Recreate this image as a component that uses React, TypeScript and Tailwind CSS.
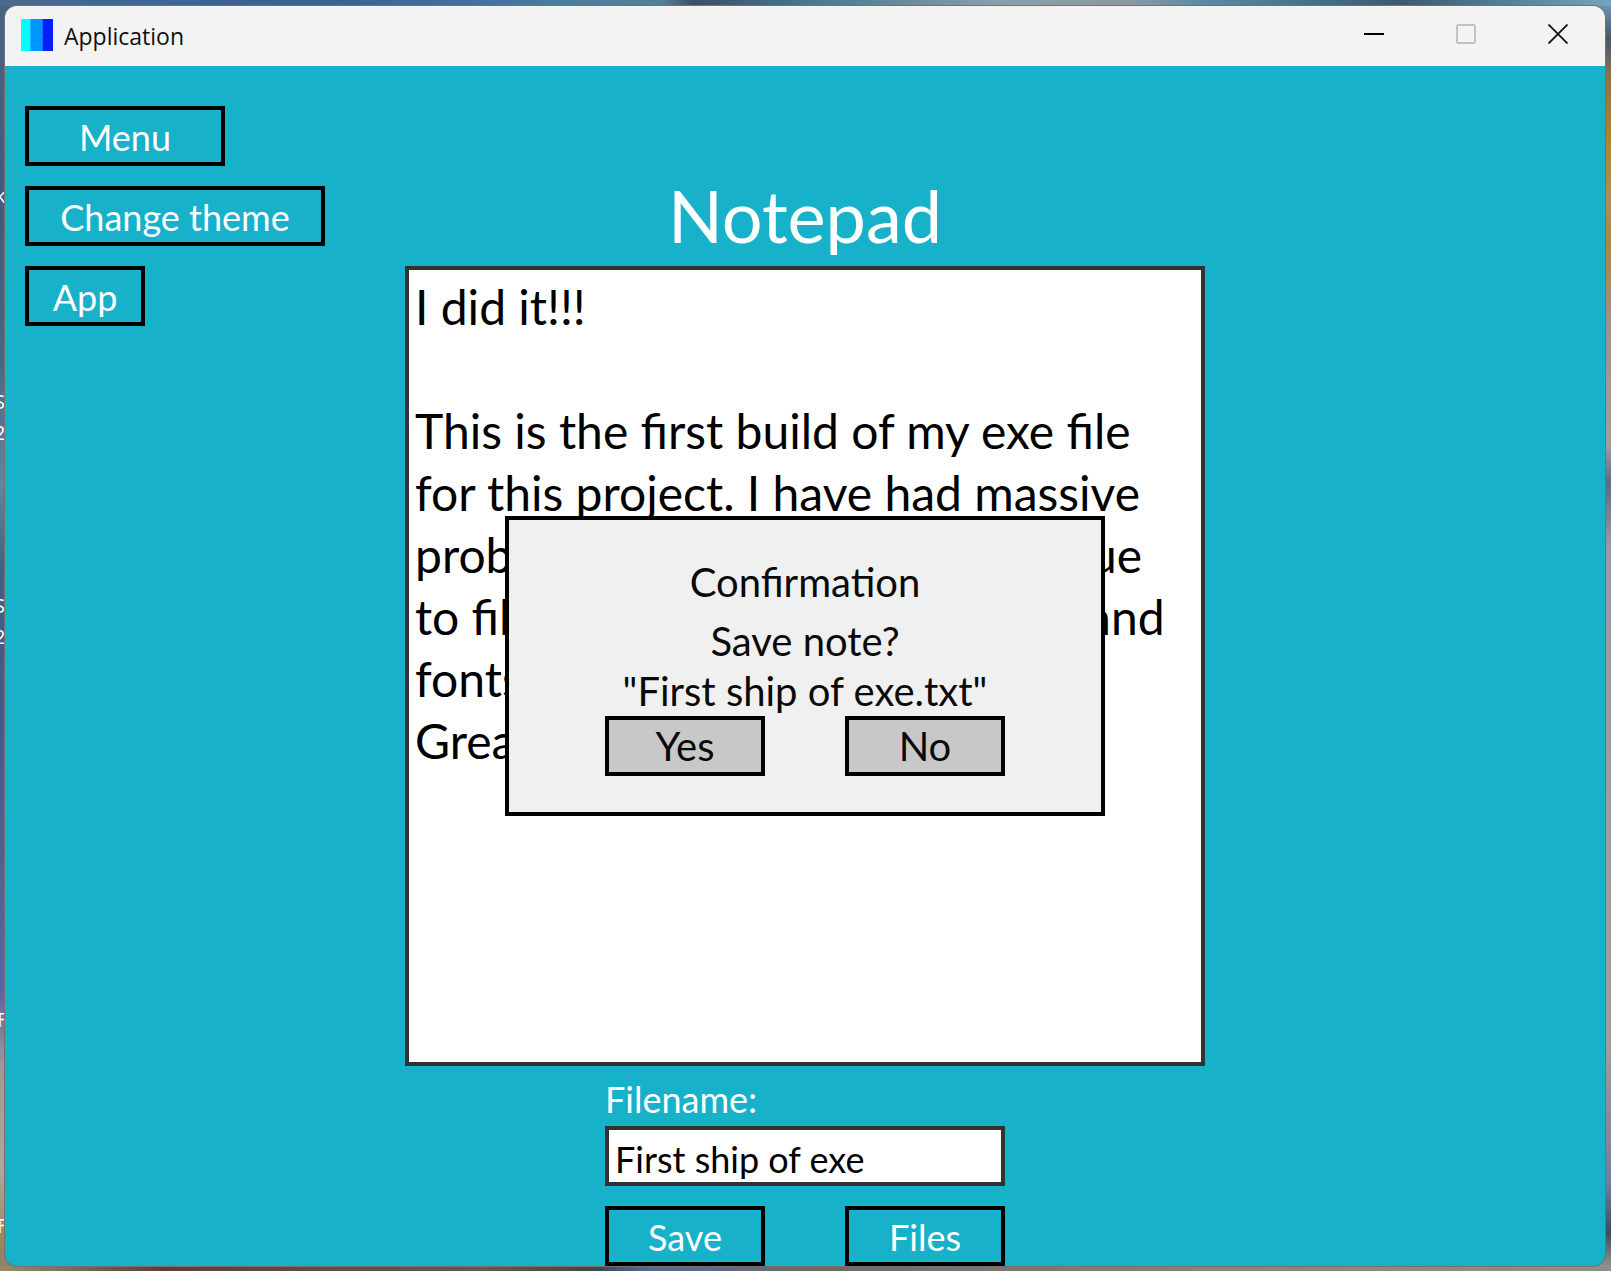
const note = `I did it!!!

This is the first build of my exe file
for this project. I have had massive
problems getting it to run fully due
to file paths, stale images, icons and
fonts not loading.
Great`;

const edgeLabels = [
  { text: "k", box: "top-[182px] -left-[5px]" },
  { text: "S", box: "top-[388px] -left-[6px]" },
  { text: "2", box: "top-[419px] -left-[6px]" },
  { text: "S", box: "top-[592px] -left-[6px]" },
  { text: "2", box: "top-[623px] -left-[6px]" },
  { text: "F", box: "top-[1006px] -left-[3px]" },
  { text: "F", box: "top-[1212px] -left-[3px]" },
];

const outline = "h-[60px] border-4 border-black pt-[2px] text-[36px] leading-[50px] text-white";

function Desktop() {
  return (
    <div aria-hidden="true" className="absolute inset-0 overflow-hidden bg-[#85827c]">
      <div className="absolute inset-y-0 left-0 w-1/2 bg-[linear-gradient(180deg,#4a6584_0%,#3f5a7a_15%,#456684_28%,#62869b_38%,#3f5f80_45%,#425a8c_58%,#4f6391_68%,#5a64a0_78%,#9b9b98_84%,#a9aaa7_92%,#a08a55_97%,#8b8068_100%)]" />
      <div className="absolute inset-y-0 right-0 w-1/2 bg-[linear-gradient(180deg,#6f9fbd_0%,#46586c_3%,#8a7350_6%,#b0832f_11%,#a8905f_16%,#ab8544_19%,#9a9490_26%,#a09d9b_35%,#5c6b84_38%,#9b9b9d_43%,#a09e9d_82%,#8c8c90_88%,#6f7fa0_93%,#3e4d5a_97%,#9d9d97_100%)]" />
      <div className="absolute inset-x-0 top-0 h-[6px] bg-[linear-gradient(90deg,#4a6a8c,#3b6090_20%,#4c7c9c_35%,#5a7f9a_41%,#3a4f68_43%,#4a7590_50%,#88a0ac_62%,#8a9aa5_70%,#5a88a5_75%,#3a5a70_87%,#76a3c0)]" />
      <div className="absolute inset-x-0 bottom-0 h-[5px] bg-[linear-gradient(90deg,#978c6a,#5e3e36_10%,#6b5650_30%,#3f434c_37%,#566890_40%,#6f6a66_52%,#86837f_75%,#8f8f88)]" />
      {edgeLabels.map((label, i) => (
        <span key={i} className={`absolute font-['Open_Sans'] text-[20px] leading-7 text-white ${label.box}`}>
          {label.text}
        </span>
      ))}
    </div>
  );
}

function TitleBar() {
  return (
    <header className="flex h-[60px] shrink-0 items-center bg-[#f3f3f3] pl-4 pr-px">
      <svg width="32" height="32" viewBox="0 0 32 32" className="-mt-[2px]" aria-hidden="true">
        <rect width="32" height="32" fill="#0095ff" />
        <rect width="9" height="32" fill="#00ffff" />
        <rect x="9" width="1" height="32" fill="#22b4ff" />
        <rect x="21" width="1" height="32" fill="#1470ff" />
        <rect x="22" width="10" height="32" fill="#0022ff" />
        <g fill="#0078e8">
          {[3, 10, 15, 22, 28].map((y) => (
            <g key={y}>
              <rect x="4" y={y} width="1" height="1" fill="#00dcf0" />
              <rect x="7" y={y - 2} width="1" height="1" fill="#00dcf0" />
              <rect x="13" y={y - 1} width="1" height="1" />
              <rect x="17" y={y} width="1" height="1" />
              <rect x="20" y={y - 2} width="1" height="1" />
              <rect x="25" y={y} width="1" height="1" fill="#3a00f0" />
              <rect x="29" y={y - 1} width="1" height="1" fill="#3a00f0" />
            </g>
          ))}
        </g>
      </svg>
      <h1 className="ml-[11px] grow font-['Open_Sans'] text-[23px] leading-8 text-[#111]">Application</h1>
      <div className="-mt-1 flex items-center">
        <button aria-label="Minimize" className="flex h-12 w-[92px] items-center justify-center">
          <svg width="20" height="20" viewBox="0 0 20 20">
            <path d="M0 10h20" stroke="#000" strokeWidth="2" />
          </svg>
        </button>
        <button aria-label="Maximize" disabled className="flex h-12 w-[92px] items-center justify-center">
          <svg width="20" height="20" viewBox="0 0 20 20" fill="none">
            <rect x="1" y="1" width="18" height="18" rx="1.5" stroke="#c3c3c3" strokeWidth="2" />
          </svg>
        </button>
        <button aria-label="Close" className="flex h-12 w-[92px] items-center justify-center">
          <svg width="20" height="20" viewBox="0 0 20 20">
            <path d="M0.5 0.5l19 19M19.5 0.5l-19 19" stroke="#111" strokeWidth="1.8" />
          </svg>
        </button>
      </div>
    </header>
  );
}

function Confirmation() {
  return (
    <div
      role="dialog"
      aria-labelledby="confirm-title"
      className="absolute left-1/2 top-1/2 flex h-[300px] w-[600px] -translate-x-1/2 -translate-y-1/2 flex-col items-center border-4 border-black bg-[#f0f0f0] pt-9 text-[40px] text-[#0a0a0a]"
    >
      <h3 id="confirm-title" className="leading-[52px]">Confirmation</h3>
      <p className="pt-2 text-center leading-[50px]">
        Save note?
        <br />
        "First ship of exe.txt"
      </p>
      <div className="flex gap-20">
        <button className="h-[60px] w-40 border-4 border-black bg-[#c8c8c8] leading-[52px]">Yes</button>
        <button className="h-[60px] w-40 border-4 border-black bg-[#c8c8c8] leading-[52px]">No</button>
      </div>
    </div>
  );
}

export default function App() {
  return (
    <div className="relative min-h-screen pt-[6px] pr-[6px] pb-[5px] pl-[5px] font-['Lato',sans-serif]">
      <Desktop />
      <div className="relative flex min-h-[calc(100vh-11px)] flex-col overflow-hidden rounded-xl bg-[#17b1c9] shadow-[0_0_0_1px_#77706f]">
        <TitleBar />
        <div className="grid grow grid-cols-[1fr_800px_1fr]">
          <nav className="flex flex-col items-start gap-5 pl-5 pt-10">
            <button className={`w-[200px] ${outline}`}>Menu</button>
            <button className={`w-[300px] ${outline}`}>Change theme</button>
            <button className={`w-[120px] ${outline}`}>App</button>
          </nav>
          <main className="flex flex-col items-center pt-[103px]">
            <h2 className="pb-1 text-[72px] leading-[93px] text-white">Notepad</h2>
            <div className="relative w-full">
              <textarea
                aria-label="Note"
                spellCheck={false}
                defaultValue={note}
                className="block h-[800px] w-full resize-none overflow-hidden whitespace-pre border-4 border-[#323232] bg-white px-[6px] pt-[6px] text-[48px] leading-[62px] text-black outline-none"
              />
              <Confirmation />
            </div>
            <form className="flex w-[400px] flex-col pt-2" onSubmit={(e) => e.preventDefault()}>
              <label htmlFor="filename" className="pb-[2px] text-[36px] leading-[50px] text-white">Filename:</label>
              <input
                id="filename"
                spellCheck={false}
                defaultValue="First ship of exe"
                className="h-[60px] border-4 border-[#323232] bg-white px-[6px] pt-[6px] text-[36px] text-black outline-none"
              />
              <div className="flex justify-between pt-5">
                <button type="submit" className={`w-40 ${outline}`}>Save</button>
                <button type="button" className={`w-40 ${outline}`}>Files</button>
              </div>
            </form>
          </main>
        </div>
      </div>
    </div>
  );
}
